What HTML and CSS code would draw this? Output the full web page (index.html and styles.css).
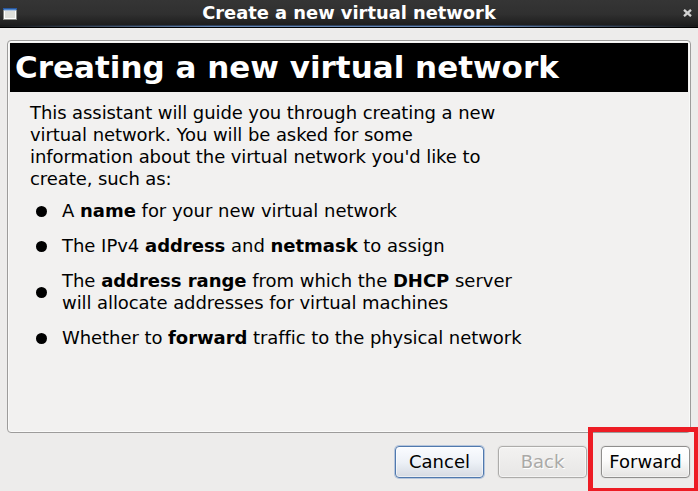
FILE: index.html
```html
<!DOCTYPE html>
<html lang="en">
<head>
<meta charset="utf-8">
<title>Create a new virtual network</title>
<link rel="stylesheet" href="styles.css">
</head>
<body>
<div class="window">
  <header class="titlebar">
    <svg class="app-icon" width="14" height="12" viewBox="0 0 14 12"><rect width="14" height="12" fill="#888a85"/><rect x="1" y="1" width="12" height="10" fill="#fff"/><rect x="2" y="2" width="10" height="8" fill="#dfe0db"/><rect width="14" height="2" fill="#2858a0"/><rect x="1" y="1" width="12" height="1" fill="#4f86cb"/><rect x="1" y="2" width="12" height="1" fill="#b0c5e0"/></svg>
    <h1 class="window-title">Create a new virtual network</h1>
    <svg class="close" width="9" height="8" viewBox="0 0 9 8"><path d="M1 .8l7 6.4M8 .8L1 7.2" stroke="#d2d2d2" stroke-width="2.3"/></svg>
  </header>
  <main class="panel">
    <h2 class="banner">Creating a new virtual network</h2>
    <p class="intro">This assistant will guide you through creating a new<br>virtual network. You will be asked for some<br>information about the virtual network you'd like to<br>create, such as:</p>
    <ul class="steps">
      <li><i class="dot"></i><span>A <b>name</b> for your new virtual network</span></li>
      <li><i class="dot"></i><span>The IPv4 <b>address</b> and <b>netmask</b> to assign</span></li>
      <li><i class="dot"></i><span>The <b>address range</b> from which the <b>DHCP</b> server<br><span class="tight">will allocate addresses for virtual machines</span></span></li>
      <li><i class="dot"></i><span class="snug">Whether to <b>forward</b> traffic to the physical network</span></li>
    </ul>
  </main>
  <footer class="actions">
    <button class="btn focused">Cancel</button>
    <button class="btn" disabled>Back</button>
    <button class="btn forward">Forward</button>
  </footer>
</div>
</body>
</html>
```
FILE: styles.css
```css
*, *::after { box-sizing: border-box; }
body { margin: 0; overflow: hidden; font-family: "DejaVu Sans", sans-serif; font-size: 18px; line-height: 22px; color: #000; }
h1, h2, p, ul { margin: 0; padding: 0; }
.window { width: 698px; height: 491px; background: #edeceb; display: flex; flex-direction: column; overflow: hidden; }
.titlebar {
  height: 28px; flex: none; display: flex; align-items: center; padding: 0 6px 2px 3px; color: #fff;
  background:
    linear-gradient(#000, #000) 0 27px / 100% 1px no-repeat,
    linear-gradient(90deg, #1a1a1a, #6485b4 30%, #6485b4 70%, #1a1a1a) 0 26px / 100% 1px no-repeat,
    linear-gradient(90deg, #1a1a1a, #30435e 30%, #30435e 70%, #1a1a1a) 0 25px / 100% 1px no-repeat,
    linear-gradient(#353535, #303030 50%, #191919);
}
.window-title { flex: 1; text-align: center; font-size: 17.85px; line-height: 22px; padding-right: 2px; }
.app-icon { margin-top: 1px; }
.panel { margin: 12px 7px 0; height: 393px; border: 1px solid #9d9c9b; border-radius: 4px; background: #f2f1f0; padding: 2px; box-shadow: inset 0 0 0 1px #fafaf9; }
.banner { height: 49px; background: #000; color: #fff; font-size: 31px; line-height: 49px; padding-left: 5px; white-space: nowrap; }
.intro { margin: 10px 0 0 20px; white-space: nowrap; letter-spacing: -.08px; }
.steps { list-style: none; margin: 10px 0 0 26px; display: flex; flex-direction: column; gap: 13px; white-space: nowrap; letter-spacing: -.02px; }
.steps li { display: flex; align-items: center; gap: 15px; }
.snug { letter-spacing: -.06px; }
.tight { letter-spacing: -.08px; }
.dot { width: 11.5px; height: 11.5px; margin: 0 0 0 -.5px; border-radius: 50%; background: #000; position: relative; top: .5px; }
.actions { display: flex; justify-content: flex-end; gap: 14px; padding: 13px 8px 0 0; }
.btn { width: 89px; height: 32px; padding: 0 0 1px; border: 1px solid #8f8e8d; border-radius: 4px; background: linear-gradient(#fff, #fbfbfb 45%, #e4e3e2); font: inherit; color: #000; box-shadow: 0 0 0 1px #e4e3e2, inset 0 0 0 1px #fff8; }
.btn:disabled { color: #aaa9a7; border-color: #adacaa; background: linear-gradient(#f3f2f1, #e7e6e5); text-shadow: 1px 1px #fff; }
.focused { border-color: #5079ae; background: linear-gradient(#fafcff, #edf1f7 50%, #d5dae2); box-shadow: 0 0 0 1px #b5c5dc, inset 0 0 0 1px #fff8; }
.forward { position: relative; }
.forward::after { content: ""; position: absolute; left: -14px; top: -20px; width: 111px; height: 66px; border: 5px solid #ed1c24; }
```
